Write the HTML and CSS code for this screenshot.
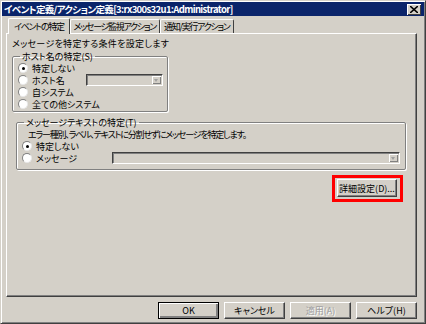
FILE: index.html
```html
<!DOCTYPE html>
<html lang="ja">
<head>
  <meta charset="UTF-8">
  <title>イベント定義/アクション定義</title>
  <link rel="stylesheet" href="styles.css">
</head>
<body>

  <div class="window">
    <div class="titlebar">
      <span class="title">イベント定義/アクション定義[3:rx300s32u1:Administrator]</span>
      <span class="close">
        <svg width="8" height="7" viewBox="0 0 8 7"><path d="M0 0 L8 7 M8 0 L0 7" stroke="#000" stroke-width="1.6"/></svg>
      </span>
    </div>

    <div class="tabs">
      <div class="tab active">イベントの特定</div>
      <div class="tab">メッセージ監視アクション</div>
      <div class="tab">通知/実行アクション</div>
    </div>

    <div class="panel">
      <div class="intro">メッセージを特定する条件を設定します</div>

      <fieldset class="group host-group">
        <legend>ホスト名の特定(S)</legend>
        <div class="radio-row first"><span class="radio checked"></span>特定しない</div>
        <div class="radio-row">
          <span class="radio"></span><span class="lbl">ホスト名</span>
          <span class="combo host-combo"><span class="arrow"></span></span>
        </div>
        <div class="radio-row"><span class="radio"></span>自システム</div>
        <div class="radio-row"><span class="radio"></span>全ての他システム</div>
      </fieldset>

      <fieldset class="group text-group">
        <legend>メッセージテキストの特定(T)</legend>
        <div class="note">エラー種別、ラベル、テキストに分割せずにメッセージを特定します。</div>
        <div class="radio-row"><span class="radio checked"></span>特定しない</div>
        <div class="radio-row">
          <span class="radio"></span><span class="lbl msg-lbl">メッセージ</span>
          <span class="combo msg-combo"><span class="arrow"></span></span>
        </div>
      </fieldset>

      <div class="detail-row">
        <div class="highlight">
          <button class="btn detail">詳細設定(D)...</button>
        </div>
      </div>
    </div>

    <div class="footer">
      <button class="btn default">OK</button>
      <button class="btn">キャンセル</button>
      <button class="btn disabled">適用(A)</button>
      <button class="btn">ヘルプ(H)</button>
    </div>
  </div>

</body>
</html>
```

FILE: styles.css
```css
body {
  margin: 0;
  padding: 0;
  width: 426px;
  height: 324px;
  overflow: hidden;
  background-color: #d4d0c8;
  font-family: "Noto Sans CJK JP", "Noto Sans", sans-serif;
  font-size: 9px;
  font-feature-settings: "palt";
  color: #000;
}

.window {
  width: 426px;
  height: 324px;
  box-sizing: border-box;
  background-color: #d4d0c8;
  border: 1px solid #404040;
  border-top-color: #d4d0c8;
  border-left-color: #d4d0c8;
  box-shadow: inset 1px 1px 0 #fff, inset -1px -1px 0 #808080;
  padding: 1px;
  display: flex;
  flex-direction: column;
}

.titlebar {
  height: 14px;
  background-color: #0a246a;
  display: flex;
  align-items: center;
  justify-content: space-between;
  padding: 0 3px 0 2px;
}

.title {
  color: #fff;
  font-weight: bold;
  font-size: 9.5px;
  letter-spacing: -0.65px;
  white-space: nowrap;
}

.close {
  width: 14px;
  height: 11px;
  background-color: #d4d0c8;
  box-shadow: inset 1px 1px 0 #fff, inset -1px -1px 0 #404040;
  display: flex;
  align-items: center;
  justify-content: center;
}

.tabs {
  display: flex;
  align-items: flex-end;
  margin: 2px 0 0 6px;
  height: 15px;
  position: relative;
  z-index: 1;
}

.tab {
  height: 13px;
  line-height: 13px;
  padding: 0 3px;
  border: 1px solid #fff;
  border-bottom: none;
  border-right-color: #404040;
  border-radius: 2px 2px 0 0;
  white-space: nowrap;
  letter-spacing: -1.3px;
}

.tab.active {
  height: 15px;
  line-height: 15px;
  padding: 0 5px;
  background-color: #d4d0c8;
  margin-bottom: -1px;
}

.panel {
  margin: 0 7px 0 4px;
  height: 264px;
  box-sizing: border-box;
  border: 1px solid #fff;
  border-right-color: #404040;
  border-bottom-color: #404040;
  box-shadow: inset -1px -1px 0 #808080;
  padding: 3px 5px 0 5px;
}

.intro {
  line-height: 13px;
  letter-spacing: 0.3px;
}

.group {
  margin: 0;
  padding: 0 4px 2px 5px;
  border: 1px solid #808080;
  box-shadow: 1px 1px 0 #fff, inset 1px 1px 0 #fff;
  border-radius: 2px;
}

.group legend {
  padding: 0 2px;
  margin-left: 2px;
  line-height: 9px;
}

.host-group {
  width: 153px;
  box-sizing: border-box;
  margin-top: 2px;
  padding-bottom: 1px;
}

.text-group {
  margin: 6px 0 0 4px;
  width: 390px;
  box-sizing: border-box;
  padding-left: 5px;
  padding-bottom: 5px;
}

.radio-row {
  display: flex;
  align-items: center;
  height: 12px;
  white-space: nowrap;
}

.radio-row.first {
  margin-top: 1px;
}

.radio {
  width: 8px;
  height: 8px;
  border-radius: 50%;
  background-color: #fff;
  border: 1px solid #808080;
  border-right-color: #e8e8e8;
  border-bottom-color: #e8e8e8;
  margin-right: 4px;
  position: relative;
  flex-shrink: 0;
}

.radio.checked::after {
  content: "";
  position: absolute;
  left: 2.5px;
  top: 2.5px;
  width: 3px;
  height: 3px;
  border-radius: 50%;
  background-color: #000;
}

.lbl {
  width: 54px;
}

.msg-lbl {
  width: 76px;
}

.combo {
  height: 12px;
  box-sizing: border-box;
  background-color: #d4d0c8;
  border: 1px solid #404040;
  border-right-color: #fff;
  border-bottom-color: #fff;
  box-shadow: inset 1px 1px 0 #808080;
  display: flex;
  justify-content: flex-end;
  align-items: center;
}

.host-combo {
  width: 77px;
}

.msg-combo {
  width: 288px;
}

.arrow {
  width: 9px;
  height: 8px;
  margin-right: 1px;
  background-color: #d4d0c8;
  box-shadow: inset 1px 1px 0 #fff, inset -1px -1px 0 #808080;
  position: relative;
}

.arrow::after {
  content: "";
  position: absolute;
  left: 2px;
  top: 3px;
  border-left: 2.5px solid transparent;
  border-right: 2.5px solid transparent;
  border-top: 3px solid #a0a0a0;
}

.note {
  line-height: 11px;
  margin: 2px 0 0 6px;
  letter-spacing: -1.2px;
}

.detail-row {
  display: flex;
  justify-content: flex-end;
  margin-top: 5px;
  padding-right: 8px;
}

.highlight {
  border: 3px solid #ff0000;
  padding: 1px 3px 2px 2px;
}

.btn {
  font-family: "Noto Sans CJK JP", "Noto Sans", sans-serif;
  font-size: 9px;
  font-feature-settings: "palt";
  height: 17px;
  width: 61px;
  padding: 0;
  background-color: #d4d0c8;
  border: 1px solid #fff;
  border-right-color: #404040;
  border-bottom-color: #404040;
  box-shadow: inset -1px -1px 0 #808080;
  color: #000;
}

.btn.detail {
  width: 60px;
  height: 18px;
  display: block;
}

.btn.disabled {
  color: #a0a0a0;
  text-shadow: 1px 1px 0 #fff;
}

.btn.default {
  border: 1px solid #000;
  box-shadow: inset 1px 1px 0 #fff, inset -2px -2px 0 #808080;
}

.footer {
  display: flex;
  justify-content: flex-end;
  gap: 5px;
  margin-top: 5px;
  padding-right: 7px;
}
```
